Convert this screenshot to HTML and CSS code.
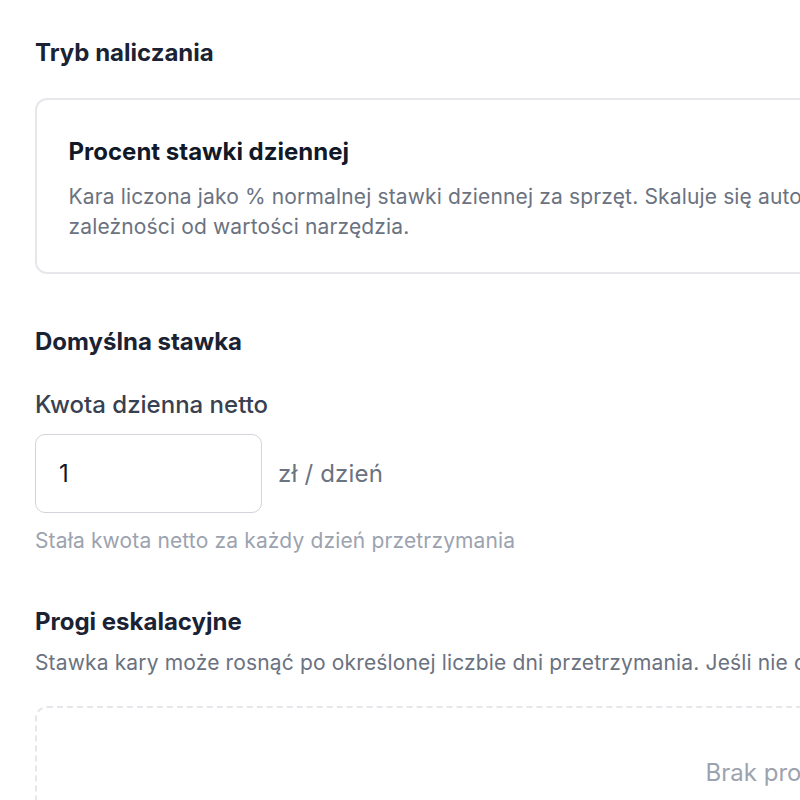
FILE: index.html
```html
<!DOCTYPE html>
<html lang="pl">
<head>
<meta charset="utf-8">
<link rel="stylesheet" href="styles.css">
</head>
<body>
<div class="page">
  <section class="section">
    <h2 class="heading">Tryb naliczania</h2>
    <div class="mode-card">
      <div class="mode-title">Procent stawki dziennej</div>
      <p class="mode-desc">Kara liczona jako % normalnej stawki dziennej za sprzęt. Skaluje się automatycznie w zależności od wartości narzędzia.</p>
    </div>
  </section>

  <section class="section rate">
    <h2 class="heading">Domyślna stawka</h2>
    <label class="field-label" for="amount">Kwota dzienna netto</label>
    <div class="field-row">
      <input id="amount" class="field-input" type="text" value="1">
      <span class="unit">zł / dzień</span>
    </div>
    <p class="hint">Stała kwota netto za każdy dzień przetrzymania</p>
  </section>

  <section class="section thresholds">
    <h2 class="heading">Progi eskalacyjne</h2>
    <p class="section-desc">Stawka kary może rosnąć po określonej liczbie dni przetrzymania. Jeśli nie dodasz żadnych progów, obowiązuje stawka domyślna.</p>
    <div class="empty-box">
      <span class="empty-text">Brak progów eskalacyjnych</span>
    </div>
  </section>
</div>
</body>
</html>
```

FILE: styles.css
```css
html, body {
  margin: 0;
  padding: 0;
  background: #ffffff;
  overflow: hidden;
}
body {
  font-family: Inter, Roboto, "Noto Sans", Arial, sans-serif;
  color: #111827;
}
.page {
  width: 1652px;
  padding: 35px 0 0 35px;
}
.section {
  margin: 0;
}
.heading {
  margin: 0;
  font-size: 24px;
  line-height: 36px;
  font-weight: 700;
  color: #1a2233;
}
.mode-card {
  margin-top: 27px;
  width: 970px;
  box-sizing: border-box;
  border: 2.5px solid #e5e7eb;
  border-radius: 12px;
  padding: 33.5px 30px 30.5px 31.5px;
}
.mode-title {
  font-size: 24px;
  line-height: 36px;
  font-weight: 700;
  color: #111827;
}
.mode-desc {
  margin: 12px 0 0;
  font-size: 21px;
  line-height: 30px;
  letter-spacing: 0.15px;
  color: #6b7280;
}
.rate {
  margin-top: 50px;
}
.field-label {
  display: block;
  margin-top: 27px;
  font-size: 24px;
  line-height: 36px;
  font-weight: 500;
  color: #374151;
}
.field-row {
  margin-top: 11px;
  display: flex;
  align-items: center;
  gap: 16px;
}
.field-input {
  width: 227px;
  height: 79px;
  box-sizing: border-box;
  border: 1.25px solid #d1d5db;
  border-radius: 10px;
  padding: 0 23px;
  font-family: inherit;
  font-size: 24px;
  color: #111827;
  background: #fff;
  outline: none;
}
.unit {
  font-size: 24px;
  letter-spacing: 0.2px;
  color: #6b7280;
}
.hint {
  margin: 13px 0 0;
  font-size: 21px;
  line-height: 30px;
  letter-spacing: 0.15px;
  color: #9ca3af;
}
.thresholds {
  margin-top: 48px;
}
.section-desc {
  margin: 8px 0 0;
  font-size: 21px;
  line-height: 30px;
  letter-spacing: 0.15px;
  color: #6b7280;
  white-space: nowrap;
}
.empty-box {
  margin-top: 28px;
  box-sizing: border-box;
  height: 170px;
  border: 2.5px dashed #e5e7eb;
  border-radius: 12px;
  display: flex;
  justify-content: center;
  padding-top: 46.5px;
}
.empty-text {
  font-size: 24px;
  line-height: 36px;
  color: #9ca3af;
}
```
